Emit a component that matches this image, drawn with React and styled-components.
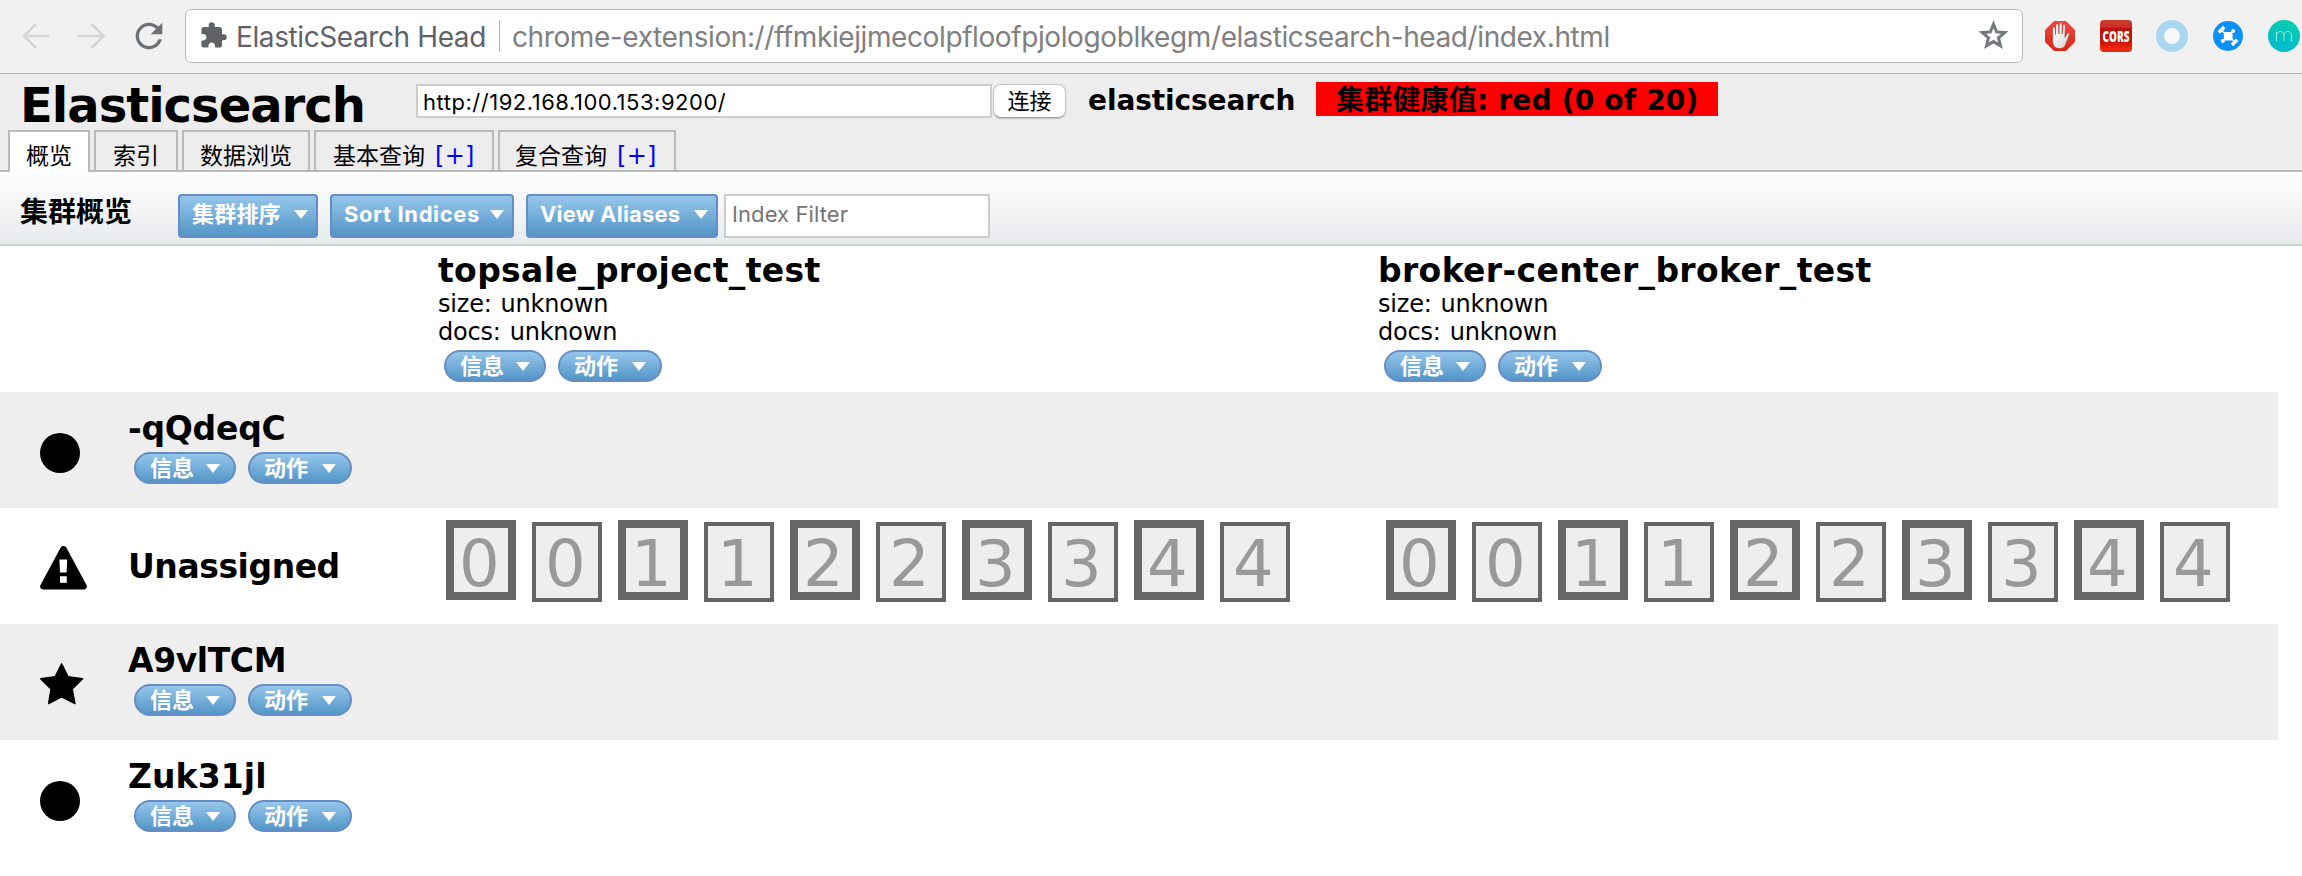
import React from "react";
import styled, { createGlobalStyle, css } from "styled-components";
import { MdExtension, MdRefresh } from "react-icons/md";

const verdana = `"DejaVu Sans", "Noto Sans CJK SC", sans-serif`;
const system = `Inter, "Noto Sans CJK SC", sans-serif`;

const GlobalStyle = createGlobalStyle`
  * { box-sizing: border-box; }
  body { margin: 0; background: #fff; color: #000; font-family: ${verdana}; overflow: hidden; }
  input, button { margin: 0; font-family: ${system}; outline: none; }
  svg { display: block; flex: none; }
`;

/* Browser chrome */
const BrowserBar = styled.div`
  display: flex;
  align-items: center;
  height: 74px;
  padding: 0 2px 2px 22px;
  background: #f1f1f1;
  border-bottom: 1px solid #b4b5b6;
`;
const NavButtons = styled.div`
  display: flex;
  align-items: center;
  gap: 26px;
  width: 163px;
`;
const ReloadIcon = styled(MdRefresh)`
  margin-left: -5px;
  width: 40px;
  height: 40px;
  color: #6e7175;
`;
const Omnibox = styled.div`
  display: flex;
  align-items: center;
  width: 1838px;
  height: 54px;
  padding: 0 11px 0 13px;
  background: #fff;
  border: 1px solid #b5b6b7;
  border-radius: 6px;
  font: 28px/50px ${system};
`;
const PuzzleIcon = styled(MdExtension)`
  width: 29px;
  height: 29px;
  margin-right: 8px;
  color: #5f6368;
`;
const SiteName = styled.span`
  width: 263px;
  padding-top: 2px;
  color: #5f6368;
  letter-spacing: -0.4px;
  white-space: nowrap;
`;
const Separator = styled.i`
  width: 1px;
  height: 32px;
  background: #b0b0b0;
`;
const Url = styled.span`
  flex: 1;
  padding: 2px 0 0 12px;
  color: #808080;
  letter-spacing: -0.4px;
  white-space: nowrap;
`;
const Extensions = styled.div`
  display: flex;
  gap: 24px;
  margin-left: 21px;
`;

/* Application header */
const Header = styled.header`
  display: flex;
  flex-direction: column;
  justify-content: space-between;
  height: 98px;
  background: #ededed;
  border-bottom: 2px solid #bababa;
`;
const HeaderTop = styled.div`
  display: flex;
  align-items: flex-start;
  height: 56px;
  padding-left: 20px;
`;
const Brand = styled.h1`
  width: 396px;
  margin: 3px 0 0;
  font-size: 48px;
  line-height: 56px;
  letter-spacing: -1px;
`;
const AddressInput = styled.input`
  width: 576px;
  height: 34px;
  margin-top: 10px;
  padding: 2px 5px 0;
  border: 2px solid #ccc;
  background: #fff;
  font-size: 22px;
  letter-spacing: 0.52px;
`;
const ConnectButton = styled.button`
  width: 73px;
  height: 34px;
  margin: 10px 0 0 1px;
  padding: 0;
  border: 1px solid #c4c4c4;
  border-bottom-color: #a8a8a8;
  border-radius: 8px;
  background: #fff;
  box-shadow: 0 1px 1px rgba(0, 0, 0, 0.2);
  font-size: 22px;
  line-height: 33px;
`;
const ClusterName = styled.strong`
  width: 228px;
  margin: 9px 0 0 22px;
  font-size: 28px;
  line-height: 36px;
  letter-spacing: -0.1px;
`;
const Health = styled.strong`
  width: 402px;
  height: 34px;
  margin-top: 8px;
  padding-left: 20px;
  background: #f00;
  font-size: 28px;
  line-height: 37px;
  letter-spacing: 0.2px;
  white-space: nowrap;
`;
const Tabs = styled.nav`
  display: flex;
  align-items: flex-start;
  gap: 4px;
  height: 42px;
  margin-bottom: -2px;
  padding-left: 8px;
`;
const Tab = styled.a`
  width: ${(p) => p.$width}px;
  height: 40px;
  padding-left: ${(p) => p.$pad || 16}px;
  border: 2px solid #bababa;
  border-bottom: 0;
  font-size: 23px;
  line-height: 48px;
  white-space: nowrap;
  ${(p) =>
    p.$active &&
    css`
      height: 42px;
      background: #fff;
    `}
`;
const More = styled.span`
  margin-left: 10px;
  color: #00f;
  font-size: 24px;
  letter-spacing: 0.3px;
`;

/* Toolbar */
const Toolbar = styled.div`
  display: flex;
  align-items: flex-start;
  height: 74px;
  padding: 22px 0 0 20px;
  background: linear-gradient(#fdfefe, #e8ebee);
  border-bottom: 2px solid #cdd1d5;
`;
const ToolbarTitle = styled.h2`
  width: 158px;
  margin: 0;
  font-size: 28px;
  line-height: 38px;
`;
const blue = css`
  display: flex;
  align-items: center;
  justify-content: space-between;
  width: ${(p) => p.$width}px;
  border: 2px solid #668dc6;
  background: linear-gradient(#96c6eb, #5296c7);
  color: #fff;
  font-family: ${system};
  font-weight: 700;
  font-size: 22px;
  white-space: nowrap;
`;
const MenuButton = styled.button`
  ${blue}
  height: 44px;
  margin-right: ${(p) => p.$after || 12}px;
  padding: 0 8px 4px 12px;
  border-radius: 4px;
  line-height: 36px;
  letter-spacing: ${(p) => p.$spacing || 0}px;
`;
const PillButton = styled.button`
  ${blue}
  height: 32px;
  padding: 0 14px;
  border-radius: 16px;
  line-height: 28px;
`;
const Caret = styled.i`
  border: 7px solid transparent;
  border-top: 9px solid #fff;
  border-bottom: 0;
`;
const FilterInput = styled.input`
  width: 266px;
  height: 44px;
  padding: 0 6px 4px;
  border: 2px solid #ccc;
  background: #fff;
  font-size: 22px;
  letter-spacing: 0.1px;
  &::placeholder { color: #757575; opacity: 1; }
`;

/* Cluster grid */
const Grid = styled.main`
  width: 2278px;
`;
const columns = css`
  display: grid;
  grid-template-columns: 128px 310px 940px 900px;
`;
const IndexRow = styled.div`
  ${columns}
  height: 146px;
  padding-top: 5px;
`;
const IndexCell = styled.div`
  grid-column: ${(p) => p.$column};
`;
const Name = styled.div`
  font-weight: 700;
  font-size: 33px;
  line-height: 40px;
  letter-spacing: ${(p) => p.$spacing || 0}px;
  white-space: nowrap;
`;
const Stats = styled.div`
  margin-top: -1px;
  font-size: 24px;
  line-height: 28px;
  letter-spacing: -0.2px;
  word-spacing: 1.5px;
`;
const Pills = styled.div`
  display: flex;
  gap: 12px;
  margin: ${(p) => p.$top}px 0 0 6px;
`;
const NodeRow = styled.div`
  ${columns}
  height: 116px;
  background: ${(p) => (p.$shaded ? "#eee" : "#fff")};
`;
const IconCell = styled.div`
  padding: ${(p) => p.$top}px 0 0 40px;
`;
const NodeCell = styled.div`
  padding-top: ${(p) => (p.$single ? 39 : 17)}px;
`;
const Shards = styled.div`
  display: flex;
  align-items: flex-start;
  gap: 16px;
  padding: 12px 0 0 8px;
`;
const Shard = styled.div`
  width: 70px;
  height: 80px;
  margin-top: ${(p) => (p.$primary ? 0 : 2)}px;
  padding-left: ${(p) => (p.$primary ? 5 : 9)}px;
  border: ${(p) => (p.$primary ? 8 : 4)}px solid #666;
  background: #eee;
  color: #999;
  font-size: 64px;
  line-height: ${(p) => (p.$primary ? 72 : 76)}px;
`;

const Arrow = ({ forward }) => (
  <svg width="30" height="30" viewBox="0 0 30 30" fill="none" stroke="#d4d5d6" strokeWidth="2.6">
    <path d={forward ? "M0 15H26M13.5 3L25.5 15L13.5 27" : "M27 15H3M14 3L2 15L14 27"} />
  </svg>
);

const BookmarkIcon = () => (
  <svg width="35" height="35" viewBox="0 0 35 35">
    <path
      d="M17.5 6.2L20.6 13.9L28.8 14.5L22.5 19.9L24.5 27.9L17.5 23.6L10.5 27.9L12.5 19.9L6.2 14.5L14.4 13.9Z"
      fill="none"
      stroke="#75787d"
      strokeWidth="3"
    />
  </svg>
);

const AdBlockIcon = () => (
  <svg width="32" height="32" viewBox="0 0 32 32">
    <defs>
      <linearGradient id="stop" x2="0" y2="1">
        <stop stopColor="#f0483c" />
        <stop offset="1" stopColor="#d8261b" />
      </linearGradient>
      <linearGradient id="palm" x2="1" y2="1">
        <stop stopColor="#fff" />
        <stop offset="1" stopColor="#d9d9d9" />
      </linearGradient>
    </defs>
    <path d="M10 1H22L31 10V22L22 31H10L1 22V10Z" fill="url(#stop)" />
    <path
      d="M8.6 18V8.3C8.6 6.4 11 6.4 11.1 8.3L11.5 14.5L11.8 5.4C11.9 3.4 14.5 3.4 14.6 5.4L14.9 14L15.3 4.2C15.4 2.3 17.9 2.3 18 4.2L18.2 14L18.9 5.6C19.1 3.8 21.5 3.9 21.4 5.8L20.9 17.5L23.1 13.4C24.2 11.9 26.1 12.8 25.4 14.6L21.8 24C20.8 27 18.7 28.5 15.8 28.5C10.8 28.5 8.6 25.5 8.6 21Z"
      fill="url(#palm)"
      stroke="#9d241c"
      strokeWidth="0.5"
    />
  </svg>
);
const CorsIcon = () => (
  <svg width="32" height="32" viewBox="0 0 32 32">
    <defs>
      <linearGradient id="cors" x2="0" y2="1">
        <stop stopColor="#cf3a33" />
        <stop offset="0.22" stopColor="#c92f28" />
        <stop offset="0.26" stopColor="#b81410" />
        <stop offset="0.65" stopColor="#c41508" />
        <stop offset="0.9" stopColor="#f42507" />
        <stop offset="1" stopColor="#c23322" />
      </linearGradient>
    </defs>
    <rect width="32" height="32" rx="4" fill="url(#cors)" />
    <g transform="translate(16 21.6) scale(0.64 1)">
      <text textAnchor="middle" fontFamily="Open Sans, sans-serif" fontWeight="800" fontSize="15.5" fill="#fff">
        CORS
      </text>
    </g>
  </svg>
);
const RingIcon = () => (
  <svg width="32" height="32" viewBox="0 0 32 32">
    <circle cx="16" cy="16" r="12" fill="#f8f8f8" stroke="#a9d7f2" strokeWidth="8" />
  </svg>
);
const DroneIcon = () => (
  <svg width="32" height="32" viewBox="0 0 32 32">
    <circle cx="16" cy="16" r="15" fill="#0a91f7" />
    <g stroke="#fff" fill="none">
      <path d="M9 10L23 22M21 11L11 21" strokeWidth="1.6" />
      <path d="M6.8 12.5L12.2 7M20 25L25.2 19.8" strokeWidth="3.4" />
    </g>
    <rect x="11.8" y="12" width="8.8" height="8.6" rx="2.6" fill="#fff" />
    <circle cx="21.2" cy="10.9" r="2" fill="#fff" />
    <circle cx="10.8" cy="21.1" r="2" fill="#fff" />
  </svg>
);
const MomentumIcon = () => (
  <svg width="32" height="32" viewBox="0 0 32 32">
    <defs>
      <linearGradient id="teal" x1="0.6" x2="0.4" y2="1">
        <stop stopColor="#06cfae" />
        <stop offset="1" stopColor="#00b9cd" />
      </linearGradient>
    </defs>
    <circle cx="16" cy="16" r="16" fill="url(#teal)" />
    <path d="M8.5 21.5V11.5M8.5 15C8.5 10.3 16 10.3 16 15V21.5M16 15C16 10.3 23.6 10.3 23.6 15V21.5" fill="none" stroke="#8ff0e6" strokeWidth="1" />
  </svg>
);

const DotIcon = () => (
  <svg width="40" height="40" viewBox="0 0 40 40">
    <circle cx="20" cy="20" r="20" />
  </svg>
);
const WarningIcon = () => (
  <svg width="47" height="44" viewBox="0 0 47 44">
    <path
      fillRule="evenodd"
      d="M20.7 1.6C22 -.5 25 -.5 26.3 1.6L46.6 39.2C47.6 41.2 46.3 43.4 44.2 43.4H2.8C.7 43.4 -.6 41.2 .4 39.2ZM19.4 13.6L20 26.6H26.6L27.2 13.6ZM20 30.2V36.8H26.8V30.2Z"
    />
  </svg>
);
const StarIcon = () => (
  <svg width="44" height="42" viewBox="0 0 44 42">
    <path
      d="M21.6 .8L28 13.6L42.6 15.8L32.2 26L35 40.6L21.6 33.8L8.6 40.6L11 26L.7 15.8L15.2 13.6Z"
      stroke="#000"
      strokeWidth="1.4"
      strokeLinejoin="round"
    />
  </svg>
);

const NodePills = ({ top }) => (
  <Pills $top={top}>
    <PillButton $width={102}>信息<Caret /></PillButton>
    <PillButton $width={104}>动作<Caret /></PillButton>
  </Pills>
);

const indices = [
  { name: "topsale_project_test", spacing: 0.34 },
  { name: "broker-center_broker_test", spacing: 0.36 },
];
const nodes = [
  { name: "-qQdeqC", icon: <DotIcon />, top: 41, spacing: -0.25 },
  { name: "Unassigned", icon: <WarningIcon />, top: 38, spacing: -0.45, unassigned: true },
  { name: "A9vlTCM", icon: <StarIcon />, top: 39, spacing: -0.4 },
  { name: "Zuk31jl", icon: <DotIcon />, top: 41, spacing: 0.1 },
];
const shards = [0, 0, 1, 1, 2, 2, 3, 3, 4, 4];

export default function App() {
  return (
    <>
      <GlobalStyle />
      <BrowserBar>
        <NavButtons>
          <Arrow />
          <Arrow forward />
          <ReloadIcon />
        </NavButtons>
        <Omnibox>
          <PuzzleIcon />
          <SiteName>ElasticSearch Head</SiteName>
          <Separator />
          <Url>chrome-extension://ffmkiejjmecolpfloofpjologoblkegm/elasticsearch-head/index.html</Url>
          <BookmarkIcon />
        </Omnibox>
        <Extensions>
          <AdBlockIcon />
          <CorsIcon />
          <RingIcon />
          <DroneIcon />
          <MomentumIcon />
        </Extensions>
      </BrowserBar>

      <Header>
        <HeaderTop>
          <Brand>Elasticsearch</Brand>
          <AddressInput defaultValue="http://192.168.100.153:9200/" />
          <ConnectButton>连接</ConnectButton>
          <ClusterName>elasticsearch</ClusterName>
          <Health>集群健康值: red (0 of 20)</Health>
        </HeaderTop>
        <Tabs>
          <Tab $width={82} $active>概览</Tab>
          <Tab $width={84} $pad={17}>索引</Tab>
          <Tab $width={128}>数据浏览</Tab>
          <Tab $width={180} $pad={17}>基本查询<More>[+]</More></Tab>
          <Tab $width={178} $pad={15}>复合查询<More>[+]</More></Tab>
        </Tabs>
      </Header>

      <Toolbar>
        <ToolbarTitle>集群概览</ToolbarTitle>
        <MenuButton $width={140} $spacing={0.2}>集群排序<Caret /></MenuButton>
        <MenuButton $width={184} $spacing={0.6}>Sort Indices<Caret /></MenuButton>
        <MenuButton $width={192} $spacing={0.2} $after={6}>View Aliases<Caret /></MenuButton>
        <FilterInput placeholder="Index Filter" />
      </Toolbar>

      <Grid>
        <IndexRow>
          {indices.map((index, i) => (
            <IndexCell key={index.name} $column={i + 3}>
              <Name $spacing={index.spacing}>{index.name}</Name>
              <Stats>
                <div>size: unknown</div>
                <div>docs: unknown</div>
              </Stats>
              <NodePills top={4} />
            </IndexCell>
          ))}
        </IndexRow>
        {nodes.map((node, i) => (
          <NodeRow key={node.name} $shaded={i % 2 === 0}>
            <IconCell $top={node.top}>{node.icon}</IconCell>
            <NodeCell $single={node.unassigned}>
              <Name $spacing={node.spacing}>{node.name}</Name>
              {!node.unassigned && <NodePills top={3} />}
            </NodeCell>
            {node.unassigned &&
              indices.map((index) => (
                <Shards key={index.name}>
                  {shards.map((n, j) => (
                    <Shard key={j} $primary={j % 2 === 0}>{n}</Shard>
                  ))}
                </Shards>
              ))}
          </NodeRow>
        ))}
      </Grid>
    </>
  );
}
